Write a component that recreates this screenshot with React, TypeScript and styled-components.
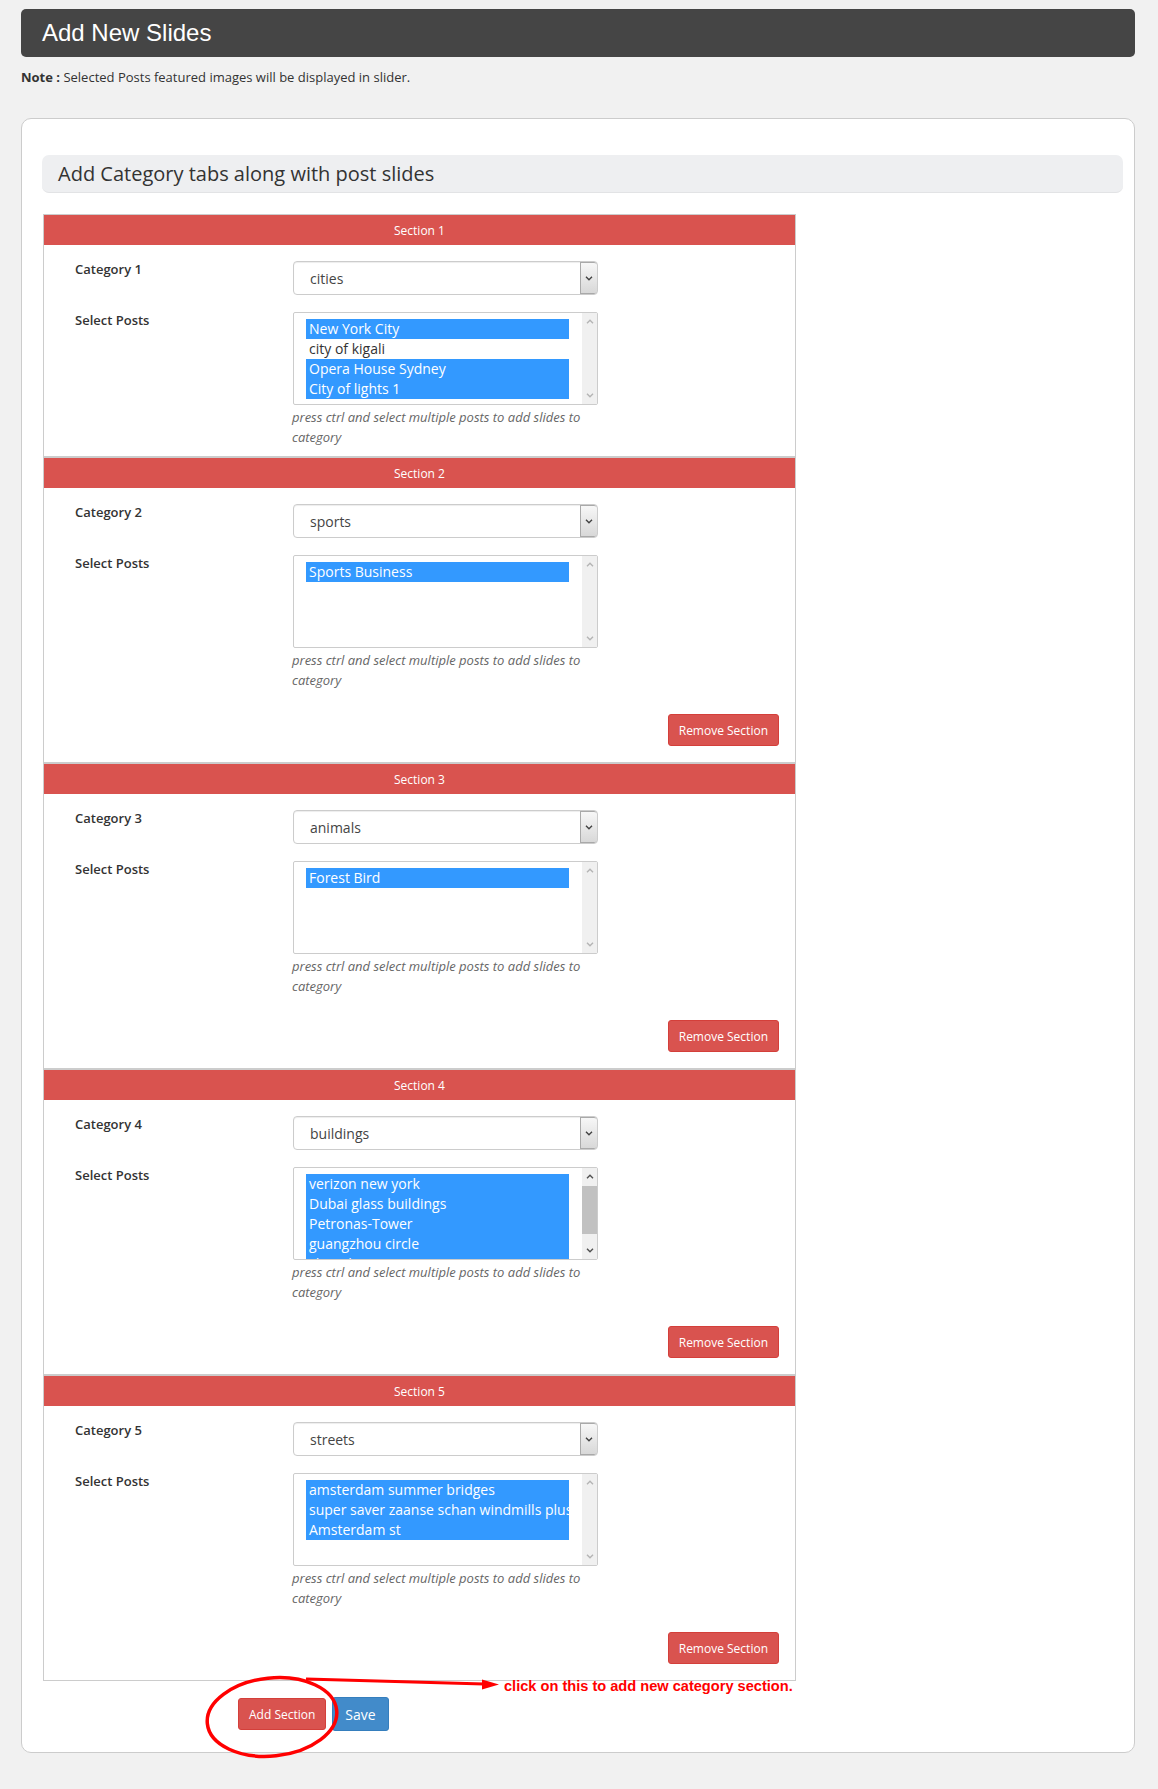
import React from "react";
import styled, { createGlobalStyle } from "styled-components";

const GlobalStyle = createGlobalStyle`
  html, body {
    margin: 0;
    padding: 0;
    background: #f1f1f1;
  }
  body {
    font-family: "Open Sans", "Liberation Sans", Arial, sans-serif;
    color: #333;
  }
  * { box-sizing: border-box; }
`;

const Page = styled.div`
  padding: 9px 23px 36px 21px;
`;

const PageTitle = styled.h1`
  margin: 0;
  height: 48px;
  display: flex;
  align-items: center;
  padding-left: 21px;
  background: #454545;
  border-radius: 5px;
  color: #fff;
  font: 400 24px "Liberation Sans", Arial, sans-serif;
`;

const Note = styled.p`
  margin: 10px 0 31px;
  font-size: 13px;
  line-height: 20px;
  color: #333;
  & b { font-weight: 700; }
`;

const Panel = styled.div`
  background: #fff;
  border: 1px solid #ccc;
  border-radius: 10px;
  padding: 36px 11px 21px 20px;
`;

const PanelHeading = styled.h2`
  margin: 0 0 21px;
  height: 38px;
  display: flex;
  align-items: center;
  padding-left: 16px;
  background: #eeeff1;
  border-radius: 7px;
  border-bottom: 1px solid #e2e3e5;
  font: 400 20px "Open Sans", sans-serif;
  color: #333;
`;

const SectionList = styled.div`
  width: 753px;
  margin-left: 1px;
`;

const Section = styled.section`
  border: 1px solid #ccc;
`;

const SectionHead = styled.div`
  height: 30px;
  display: flex;
  align-items: center;
  justify-content: center;
  background: #d9534f;
  color: #fff;
  font-size: 12px;
`;

const SectionBody = styled.div`
  padding: 16px 0 9px 31px;
`;

const FieldRow = styled.div`
  display: grid;
  grid-template-columns: 218px 305px;
  align-items: start;
  & + & { margin-top: 17px; }
`;

const FieldLabel = styled.label`
  font-size: 13px;
  font-weight: 600;
  line-height: 16px;
  color: #333;
`;

const Dropdown = styled.div`
  display: flex;
  height: 34px;
  border: 1px solid #ccc;
  border-radius: 4px;
  background: #fff;
  box-shadow: inset 0 1px 1px rgba(0, 0, 0, 0.075);
  overflow: hidden;
`;

const DropdownValue = styled.span`
  flex: 1;
  padding-left: 16px;
  font-size: 14px;
  line-height: 33px;
  color: #444;
`;

const DropdownButton = styled.span`
  width: 17px;
  display: flex;
  align-items: center;
  justify-content: center;
  border: 1px solid #a9a9a9;
  border-right: none;
  border-radius: 0 3px 3px 0;
  background: linear-gradient(#f7f7f7, #d8d8d8);
`;

const ListBox = styled.div`
  display: flex;
  height: 93px;
  border: 1px solid #ccc;
  border-radius: 2px;
  background: #fff;
`;

const Options = styled.div`
  flex: 1;
  min-width: 0;
  padding: 6px 13px 0 12px;
  overflow: hidden;
`;

const Option = styled.div<{ $selected?: boolean }>`
  height: 20px;
  line-height: 20px;
  padding-left: 3px;
  font-size: 14px;
  white-space: nowrap;
  overflow: hidden;
  background: ${(p) => (p.$selected ? "#3399ff" : "transparent")};
  color: ${(p) => (p.$selected ? "#fff" : "#333")};
`;

const ScrollTrack = styled.div`
  width: 15px;
  display: flex;
  flex-direction: column;
  background: #f0f0f0;
`;

const ScrollArrow = styled.span`
  height: 17px;
  display: flex;
  align-items: center;
  justify-content: center;
`;

const ScrollThumb = styled.span`
  height: 48px;
  margin-top: 1px;
  background: #c1c1c1;
`;

const ScrollSpacer = styled.span`
  flex: 1;
`;

const Hint = styled.p`
  margin: 2px 0 0 -1px;
  width: 305px;
  font-size: 13px;
  font-style: italic;
  line-height: 20px;
  color: #666;
`;

const SectionActions = styled.div`
  display: flex;
  justify-content: flex-end;
  margin: 24px 16px 7px 0;
`;

const Button = styled.button<{ $tone: "danger" | "primary" }>`
  height: ${(p) => (p.$tone === "primary" ? "34px" : "32px")};
  padding: ${(p) => (p.$tone === "primary" ? "0 12px" : "0 10px")};
  border-radius: 3px;
  border: 1px solid ${(p) => (p.$tone === "primary" ? "#357ebd" : "#d43f3a")};
  background: ${(p) => (p.$tone === "primary" ? "#428bca" : "#d9534f")};
  color: #fff;
  font-family: "Open Sans", sans-serif;
  font-size: ${(p) => (p.$tone === "primary" ? "14px" : "12px")};
  cursor: pointer;
`;

const Footer = styled.div`
  position: relative;
  display: flex;
  align-items: center;
  gap: 6px;
  padding: 16px 0 0 196px;
`;

const Annotation = styled.svg`
  position: absolute;
  left: 0;
  top: -6px;
  overflow: visible;
  pointer-events: none;
`;

const AnnotationText = styled.span`
  position: absolute;
  left: 462px;
  top: -3px;
  line-height: 18px;
  white-space: nowrap;
  color: #ff0000;
  font: 700 14.6px "Liberation Sans", Arial, sans-serif;
`;

type Post = { title: string; selected?: boolean };
type SlideSection = {
  category: string;
  posts: Post[];
  scrollable?: boolean;
};

const sections: SlideSection[] = [
  {
    category: "cities",
    posts: [
      { title: "New York City", selected: true },
      { title: "city of kigali" },
      { title: "Opera House Sydney", selected: true },
      { title: "City of lights 1", selected: true },
    ],
  },
  { category: "sports", posts: [{ title: "Sports Business", selected: true }] },
  { category: "animals", posts: [{ title: "Forest Bird", selected: true }] },
  {
    category: "buildings",
    scrollable: true,
    posts: [
      { title: "verizon new york", selected: true },
      { title: "Dubai glass buildings", selected: true },
      { title: "Petronas-Tower", selected: true },
      { title: "guangzhou circle", selected: true },
      { title: "shanghai tower", selected: true },
    ],
  },
  {
    category: "streets",
    posts: [
      { title: "amsterdam summer bridges", selected: true },
      { title: "super saver zaanse schan windmills plus tour", selected: true },
      { title: "Amsterdam st", selected: true },
    ],
  },
];

const Chevron = ({ up, color }: { up?: boolean; color: string }) => (
  <svg width="8" height="5" viewBox="0 0 8 5">
    <path
      d={up ? "M1 4.2 L4 1.2 L7 4.2" : "M1 0.8 L4 3.8 L7 0.8"}
      fill="none"
      stroke={color}
      strokeWidth="1.4"
    />
  </svg>
);

const SectionCard = ({ index, data }: { index: number; data: SlideSection }) => {
  const arrowColor = data.scrollable ? "#505050" : "#b4b4b4";
  return (
    <Section>
      <SectionHead>Section {index + 1}</SectionHead>
      <SectionBody>
        <FieldRow>
          <FieldLabel>Category {index + 1}</FieldLabel>
          <Dropdown>
            <DropdownValue>{data.category}</DropdownValue>
            <DropdownButton>
              <Chevron color="#444" />
            </DropdownButton>
          </Dropdown>
        </FieldRow>
        <FieldRow>
          <FieldLabel>Select Posts</FieldLabel>
          <div>
            <ListBox>
              <Options>
                {data.posts.map((p) => (
                  <Option key={p.title} $selected={p.selected}>
                    {p.title}
                  </Option>
                ))}
              </Options>
              <ScrollTrack>
                <ScrollArrow>
                  <Chevron up color={arrowColor} />
                </ScrollArrow>
                {data.scrollable && <ScrollThumb />}
                <ScrollSpacer />
                <ScrollArrow>
                  <Chevron color={arrowColor} />
                </ScrollArrow>
              </ScrollTrack>
            </ListBox>
            <Hint>press ctrl and select multiple posts to add slides to category</Hint>
          </div>
        </FieldRow>
        {index > 0 && (
          <SectionActions>
            <Button $tone="danger">Remove Section</Button>
          </SectionActions>
        )}
      </SectionBody>
    </Section>
  );
};

export default function App() {
  return (
    <>
      <GlobalStyle />
      <Page>
        <PageTitle>Add New Slides</PageTitle>
        <Note>
          <b>Note :</b> Selected Posts featured images will be displayed in slider.
        </Note>
        <Panel>
          <PanelHeading>Add Category tabs along with post slides</PanelHeading>
          <SectionList>
            {sections.map((s, i) => (
              <SectionCard key={i} index={i} data={s} />
            ))}
          </SectionList>
          <Footer>
            <Button $tone="danger">Add Section</Button>
            <Button $tone="primary">Save</Button>
            <Annotation width="480" height="90" viewBox="0 0 480 90">
              <ellipse
                cx="230"
                cy="42"
                rx="65"
                ry="39"
                transform="rotate(-6 230 42)"
                fill="none"
                stroke="#ff0000"
                strokeWidth="3.5"
              />
              <line x1="264" y1="4" x2="442" y2="9" stroke="#ff0000" strokeWidth="3" />
              <polygon points="440,4.5 457,9.6 440,14.5" fill="#ff0000" />
            </Annotation>
            <AnnotationText>click on this to add new category section.</AnnotationText>
          </Footer>
        </Panel>
      </Page>
    </>
  );
}
